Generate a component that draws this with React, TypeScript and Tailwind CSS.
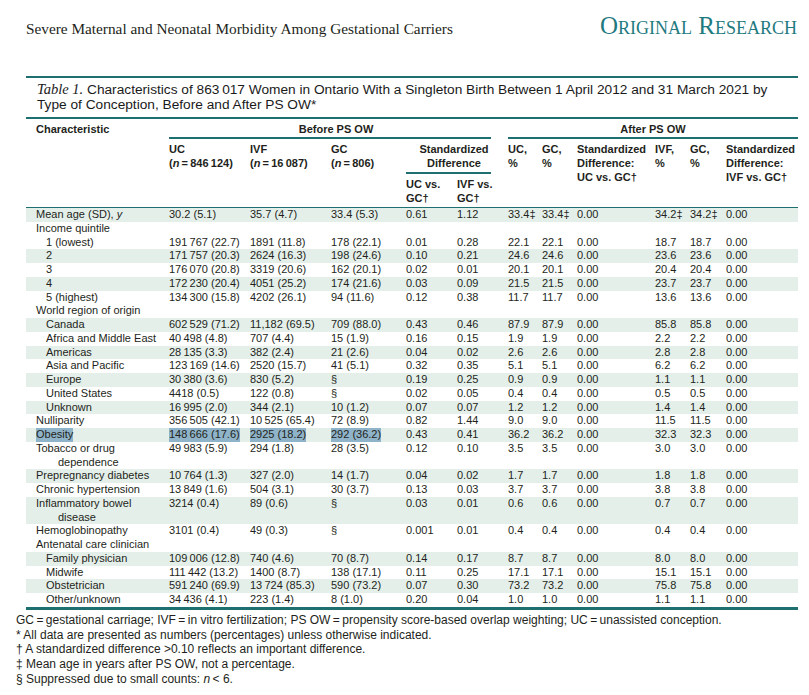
import React from "react"

const TEAL = "bg-[#1d6f70]"
const cols = "grid grid-cols-[143px_81px_81px_75px_51px_51px_34px_35px_78px_35px_36px_72px]"

type Row = {
  label: React.ReactNode
  indent?: boolean
  wrap?: string
  values?: string[]
  shaded?: boolean
  highlight?: boolean
}

const T = "\u2009"

const rows: Row[] = [
  { label: <>Mean age (SD), <i>y</i></>, shaded: true, values: ["30.2 (5.1)", "35.7 (4.7)", "33.4 (5.3)", "0.61", "1.12", "33.4‡", "33.4‡", "0.00", "34.2‡", "34.2‡", "0.00"] },
  { label: "Income quintile" },
  { label: "1 (lowest)", indent: true, values: [`191${T}767 (22.7)`, "1891 (11.8)", "178 (22.1)", "0.01", "0.28", "22.1", "22.1", "0.00", "18.7", "18.7", "0.00"] },
  { label: "2", indent: true, shaded: true, values: [`171${T}757 (20.3)`, "2624 (16.3)", "198 (24.6)", "0.10", "0.21", "24.6", "24.6", "0.00", "23.6", "23.6", "0.00"] },
  { label: "3", indent: true, values: [`176${T}070 (20.8)`, "3319 (20.6)", "162 (20.1)", "0.02", "0.01", "20.1", "20.1", "0.00", "20.4", "20.4", "0.00"] },
  { label: "4", indent: true, shaded: true, values: [`172${T}230 (20.4)`, "4051 (25.2)", "174 (21.6)", "0.03", "0.09", "21.5", "21.5", "0.00", "23.7", "23.7", "0.00"] },
  { label: "5 (highest)", indent: true, values: [`134${T}300 (15.8)`, "4202 (26.1)", "94 (11.6)", "0.12", "0.38", "11.7", "11.7", "0.00", "13.6", "13.6", "0.00"] },
  { label: "World region of origin" },
  { label: "Canada", indent: true, shaded: true, values: [`602${T}529 (71.2)`, "11,182 (69.5)", "709 (88.0)", "0.43", "0.46", "87.9", "87.9", "0.00", "85.8", "85.8", "0.00"] },
  { label: "Africa and Middle East", indent: true, values: [`40${T}498 (4.8)`, "707 (4.4)", "15 (1.9)", "0.16", "0.15", "1.9", "1.9", "0.00", "2.2", "2.2", "0.00"] },
  { label: "Americas", indent: true, shaded: true, values: [`28${T}135 (3.3)`, "382 (2.4)", "21 (2.6)", "0.04", "0.02", "2.6", "2.6", "0.00", "2.8", "2.8", "0.00"] },
  { label: "Asia and Pacific", indent: true, values: [`123${T}169 (14.6)`, "2520 (15.7)", "41 (5.1)", "0.32", "0.35", "5.1", "5.1", "0.00", "6.2", "6.2", "0.00"] },
  { label: "Europe", indent: true, shaded: true, values: [`30${T}380 (3.6)`, "830 (5.2)", "§", "0.19", "0.25", "0.9", "0.9", "0.00", "1.1", "1.1", "0.00"] },
  { label: "United States", indent: true, values: ["4418 (0.5)", "122 (0.8)", "§", "0.02", "0.05", "0.4", "0.4", "0.00", "0.5", "0.5", "0.00"] },
  { label: "Unknown", indent: true, shaded: true, values: [`16${T}995 (2.0)`, "344 (2.1)", "10 (1.2)", "0.07", "0.07", "1.2", "1.2", "0.00", "1.4", "1.4", "0.00"] },
  { label: "Nulliparity", values: [`356${T}505 (42.1)`, `10${T}525 (65.4)`, "72 (8.9)", "0.82", "1.44", "9.0", "9.0", "0.00", "11.5", "11.5", "0.00"] },
  { label: "Obesity", shaded: true, highlight: true, values: [`148${T}666 (17.6)`, "2925 (18.2)", "292 (36.2)", "0.43", "0.41", "36.2", "36.2", "0.00", "32.3", "32.3", "0.00"] },
  { label: "Tobacco or drug", wrap: "dependence", values: [`49${T}983 (5.9)`, "294 (1.8)", "28 (3.5)", "0.12", "0.10", "3.5", "3.5", "0.00", "3.0", "3.0", "0.00"] },
  { label: "Prepregnancy diabetes", shaded: true, values: [`10${T}764 (1.3)`, "327 (2.0)", "14 (1.7)", "0.04", "0.02", "1.7", "1.7", "0.00", "1.8", "1.8", "0.00"] },
  { label: "Chronic hypertension", values: [`13${T}849 (1.6)`, "504 (3.1)", "30 (3.7)", "0.13", "0.03", "3.7", "3.7", "0.00", "3.8", "3.8", "0.00"] },
  { label: "Inflammatory bowel", wrap: "disease", shaded: true, values: ["3214 (0.4)", "89 (0.6)", "§", "0.03", "0.01", "0.6", "0.6", "0.00", "0.7", "0.7", "0.00"] },
  { label: "Hemoglobinopathy", values: ["3101 (0.4)", "49 (0.3)", "§", "0.001", "0.01", "0.4", "0.4", "0.00", "0.4", "0.4", "0.00"] },
  { label: "Antenatal care clinician" },
  { label: "Family physician", indent: true, shaded: true, values: [`109${T}006 (12.8)`, "740 (4.6)", "70 (8.7)", "0.14", "0.17", "8.7", "8.7", "0.00", "8.0", "8.0", "0.00"] },
  { label: "Midwife", indent: true, values: [`111${T}442 (13.2)`, "1400 (8.7)", "138 (17.1)", "0.11", "0.25", "17.1", "17.1", "0.00", "15.1", "15.1", "0.00"] },
  { label: "Obstetrician", indent: true, shaded: true, values: [`591${T}240 (69.9)`, `13${T}724 (85.3)`, "590 (73.2)", "0.07", "0.30", "73.2", "73.2", "0.00", "75.8", "75.8", "0.00"] },
  { label: "Other/unknown", indent: true, values: [`34${T}436 (4.1)`, "223 (1.4)", "8 (1.0)", "0.20", "0.04", "1.0", "1.0", "0.00", "1.1", "1.1", "0.00"] },
]

function BodyRow({ row }: { row: Row }) {
  const mark = "inline-block bg-[#8fb4c9]"
  return (
    <div className={`${cols} leading-[13.75px] ${row.shaded ? "bg-[#e5efea]" : ""}`}>
      <div className={row.indent ? "pl-[20px]" : "pl-[10px]"}>
        {row.highlight ? <span className={mark}>{row.label}</span> : row.label}
        {row.wrap && <div className="pl-[22px]">{row.wrap}</div>}
      </div>
      {(row.values ?? Array(11).fill("")).map((v, i) => (
        <div key={i} className="whitespace-nowrap">
          {row.highlight && i < 3 ? <span className={mark}>{v}</span> : v}
        </div>
      ))}
    </div>
  )
}

export default function App() {
  return (
    <div className="relative h-[695px] w-[809px] overflow-hidden bg-white font-['Liberation_Sans',Arial,sans-serif] text-[11px] text-[#231f20]">
      <div className="flex h-[76px] items-baseline justify-between pl-[26px] pr-[12px] pt-[12px] font-['Liberation_Serif','Times_New_Roman',serif]">
        <span className="text-[15.3px] leading-[28px] text-[#231f20]">Severe Maternal and Neonatal Morbidity Among Gestational Carriers</span>
        <span className="text-[25px] leading-[28px] text-[#1f7a80] [font-variant:small-caps]">Original Research</span>
      </div>

      <div className="ml-[26px] w-[772px]">
        <div className={`h-[2px] ${TEAL}`} />
        <div className="whitespace-nowrap pl-[11px] pt-[4px] pb-[5px] text-[13.7px] leading-[15px] text-[#1a1a1a]">
          <span className="font-['Liberation_Serif',serif] text-[14.5px] italic">Table 1.</span>
          {"  "}Characteristics of 863{T}017 Women in Ontario With a Singleton Birth Between 1 April 2012 and 31 March 2021 by
          <br />
          Type of Conception, Before and After PS OW*
        </div>
        <div className={`h-[2px] ${TEAL}`} />

        <div className={`${cols} grid-rows-[20px_35px_33px] font-bold leading-[14px]`}>
          <div className="col-start-1 row-span-3 row-start-1 pl-[10px] pt-[3px]">Characteristic</div>
          <div className="col-span-5 col-start-2 row-start-1">
            <div className="pt-[3px] pb-[1px] pr-[5px] text-center">Before PS OW</div>
            <div className={`mr-[17px] h-[2px] ${TEAL}`} />
          </div>
          <div className="col-span-6 col-start-7 row-start-1">
            <div className="pt-[3px] pb-[1px] text-center">After PS OW</div>
            <div className={`h-[2px] ${TEAL}`} />
          </div>

          <div className="col-start-2 row-span-2 row-start-2 whitespace-nowrap pt-[3px]">
            UC<br />(<i>n</i>{T}={T}846{T}124)
          </div>
          <div className="col-start-3 row-span-2 row-start-2 whitespace-nowrap pt-[3px]">
            IVF<br />(<i>n</i>{T}={T}16{T}087)
          </div>
          <div className="col-start-4 row-span-2 row-start-2 whitespace-nowrap pt-[3px]">
            GC<br />(<i>n</i>{T}={T}806)
          </div>
          <div className="col-span-2 col-start-5 row-start-2">
            <div className="pt-[3px] pb-[2px] pr-[6px] text-center">
              Standardized<br />Difference
            </div>
            <div className={`mr-[17px] h-[2px] ${TEAL}`} />
          </div>
          <div className="col-start-5 row-start-3 pt-[3px]">
            UC vs.<br />GC†
          </div>
          <div className="col-start-6 row-start-3 pt-[3px]">
            IVF vs.<br />GC†
          </div>

          <div className="col-start-7 row-span-2 row-start-2 pt-[3px]">UC,<br />%</div>
          <div className="col-start-8 row-span-2 row-start-2 pt-[3px]">GC,<br />%</div>
          <div className="col-start-9 row-span-2 row-start-2 whitespace-nowrap pt-[3px]">
            Standardized<br />Difference:<br />UC vs. GC†
          </div>
          <div className="col-start-10 row-span-2 row-start-2 pt-[3px]">IVF,<br />%</div>
          <div className="col-start-11 row-span-2 row-start-2 pt-[3px]">GC,<br />%</div>
          <div className="col-start-12 row-span-2 row-start-2 whitespace-nowrap pt-[3px]">
            Standardized<br />Difference:<br />IVF vs. GC†
          </div>
        </div>

        <div className={`h-px ${TEAL}`} />
        <div>
          {rows.map((r, i) => (
            <BodyRow key={i} row={r} />
          ))}
        </div>
        <div className={`h-[3px] ${TEAL}`} />
      </div>

      <div className="pl-[16px] pt-[3px] text-[12px] leading-[14.8px] text-[#231f20]">
        <div>GC{T}={T}gestational carriage; IVF{T}={T}in vitro fertilization; PS OW{T}={T}propensity score-based overlap weighting; UC{T}={T}unassisted conception.</div>
        <div>* All data are presented as numbers (percentages) unless otherwise indicated.</div>
        <div>† A standardized difference &gt;0.10 reflects an important difference.</div>
        <div>‡ Mean age in years after PS OW, not a percentage.</div>
        <div>§ Suppressed due to small counts: <i>n</i>{T}&lt; 6.</div>
      </div>
    </div>
  )
}
